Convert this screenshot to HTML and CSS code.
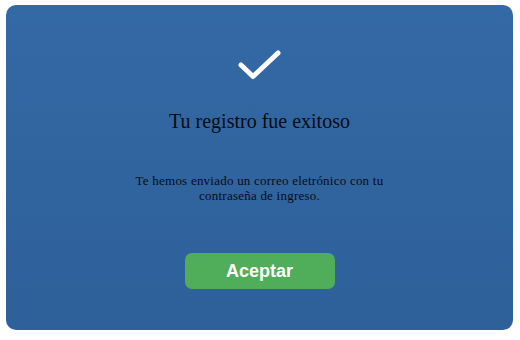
FILE: index.html
```html
<!DOCTYPE html>
<html lang="es">
<head>
<meta charset="utf-8">
<link rel="stylesheet" href="styles.css">
</head>
<body>
<div class="card">
  <svg class="check" width="44" height="34" viewBox="0 0 44 34">
    <polyline points="3,17 15,28.5 40,5" fill="none" stroke="#ffffff" stroke-width="5" stroke-linecap="round" stroke-linejoin="round"/>
  </svg>
  <h1 class="title">Tu registro fue exitoso</h1>
  <p class="message">Te hemos enviado un correo eletrónico con tu contraseña de ingreso.</p>
  <button class="accept">Aceptar</button>
</div>
</body>
</html>
```
FILE: styles.css
```css
html, body {
  margin: 0;
  padding: 0;
  background: #ffffff;
}
body {
  padding: 5px 7px 10px 6px;
}
.card {
  width: 507px;
  height: 325px;
  box-sizing: border-box;
  border-radius: 10px;
  background: linear-gradient(to bottom, #3369a5, #2e6099);
  display: flex;
  flex-direction: column;
  align-items: center;
  padding-top: 43px;
}
.check {
  display: block;
}
.title {
  margin: 27px 0 0 0;
  font-family: "Liberation Serif", serif;
  font-weight: normal;
  font-size: 20px;
  line-height: 24px;
  color: #0b0b10;
}
.message {
  margin: 40px 0 0 0;
  width: 270px;
  text-align: center;
  font-family: "Liberation Serif", serif;
  font-size: 13px;
  line-height: 15px;
  letter-spacing: 0.23px;
  color: #0b0b14;
}
.accept {
  margin-top: 50px;
  width: 150px;
  height: 36px;
  border: none;
  border-radius: 7px;
  background: #50ad59;
  color: #ffffff;
  font-family: "Liberation Sans", Arial, sans-serif;
  font-weight: bold;
  font-size: 18px;
  padding: 0;
}
```
